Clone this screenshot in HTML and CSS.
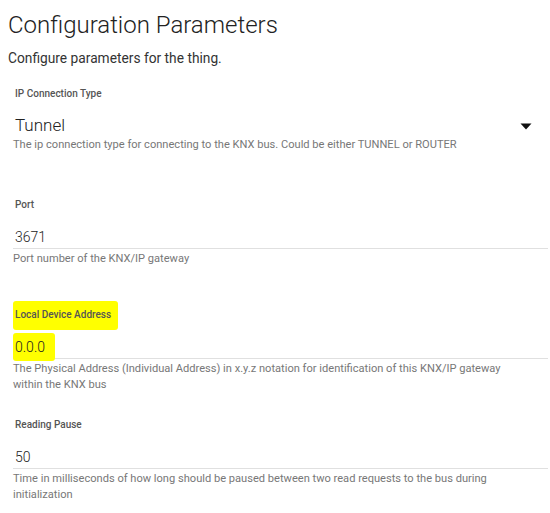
FILE: index.html
```html
<!DOCTYPE html>
<html>
<head>
<meta charset="utf-8">
<link rel="stylesheet" href="styles.css">
</head>
<body>
<div class="page">
  <h1 class="title">Configuration Parameters</h1>
  <p class="subtitle">Configure parameters for the thing.</p>
  <div class="fields">
    <div class="field field-select">
      <div class="label">IP Connection Type</div>
      <div class="select">
        <span class="select-value">Tunnel</span>
        <svg class="caret" width="12" height="7" viewBox="0 0 12 7"><path d="M0.5 0.5 L11.5 0.5 L6 6.5 Z" fill="#111"/></svg>
      </div>
      <div class="helper helper-select">The ip connection type for connecting to the KNX bus. Could be either TUNNEL or ROUTER</div>
    </div>
    <div class="field">
      <div class="label">Port</div>
      <div class="input">3671</div>
      <div class="helper">Port number of the KNX/IP gateway</div>
    </div>
    <div class="field">
      <div class="label"><span class="mark mark-label">Local Device Address</span></div>
      <div class="input"><span class="mark mark-value">0.0.0</span></div>
      <div class="helper">The Physical Address (Individual Address) in x.y.z notation for identification of this KNX/IP gateway within the KNX bus</div>
    </div>
    <div class="field">
      <div class="label">Reading Pause</div>
      <div class="input">50</div>
      <div class="helper">Time in milliseconds of how long should be paused between two read requests to the bus during initialization</div>
    </div>
  </div>
</div>
</body>
</html>
```

FILE: styles.css
```css
html, body {
  margin: 0;
  padding: 0;
  background: #fff;
}
body {
  font-family: Roboto, "Liberation Sans", sans-serif;
  color: #333;
}
.page {
  padding: 9px 2px 0 8px;
}
.title {
  margin: 0;
  font-size: 24px;
  line-height: 32px;
  font-weight: 300;
  color: #222;
}
.subtitle {
  margin: 8px 0 0 0;
  font-size: 13.75px;
  line-height: 18px;
  color: #333;
}
.fields {
  margin-left: 5px;
  padding-top: 19px;
}
.field {
  margin-bottom: 24px;
}
.field-select {
  margin-bottom: 28px;
}
.label {
  padding-left: 2px;
  font-size: 10px;
  line-height: 16px;
  font-weight: 500;
  color: #555;
}
.select {
  display: flex;
  align-items: center;
  justify-content: space-between;
  padding: 11px 16px 0 2px;
}
.select-value {
  font-size: 17px;
  line-height: 24px;
  font-weight: 300;
  color: #222;
}
.caret {
  display: block;
  margin-top: 3px;
}
.input {
  padding: 14px 0 1px 2px;
  font-size: 14px;
  line-height: 20px;
  font-weight: 300;
  color: #222;
  border-bottom: 1px solid #e0e0e0;
}
.helper {
  margin-top: 2px;
  min-height: 32px;
  font-size: 11.1px;
  line-height: 16px;
  color: #777;
  padding-right: 20px;
}
.helper-select {
  margin-top: 0;
}
.mark {
  background: #ffff00;
  border-radius: 3px;
}
.mark-label {
  display: inline-block;
  margin-left: -2px;
  padding: 6px 7px 7px 2px;
  margin-top: -6px;
  margin-bottom: -7px;
}
.mark-value {
  display: inline-block;
  margin-left: -2px;
  padding: 4px 10px 4px 2px;
  margin-top: -4px;
  margin-bottom: -4px;
}
```
